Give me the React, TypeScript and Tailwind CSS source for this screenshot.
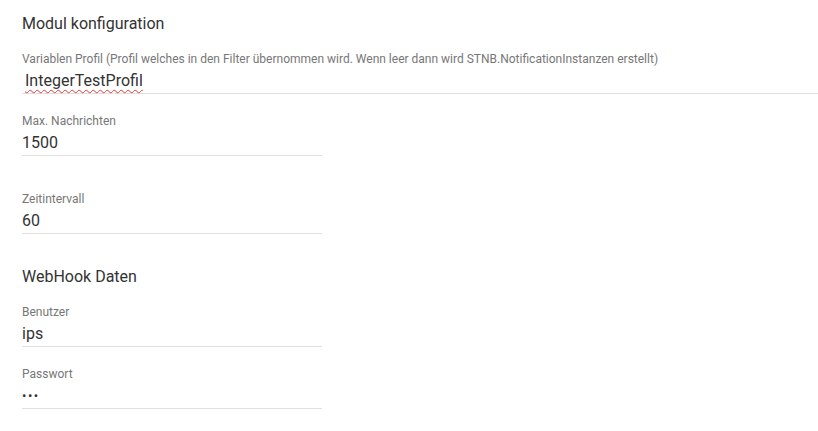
const font = { fontFamily: 'Roboto, "Noto Sans", sans-serif' };

interface FieldProps {
  label: string;
  value: string;
  wide?: boolean;
  spell?: boolean;
  className?: string;
}

function Field({ label, value, wide, spell, className }: FieldProps) {
  return (
    <div className={`${wide ? 'w-full' : 'w-[300px]'} ${className ?? ''}`}>
      <div className="h-[16px] pt-[1px] text-[12px] leading-[15px] text-[#777] whitespace-nowrap">{label}</div>
      <div className="h-[27px] pt-[2px] border-b border-[#e0e0e0] text-[16px] leading-[24px] text-[#333]">
        {spell ? (
          <span className="pl-[3px] underline decoration-wavy decoration-[#e53935] decoration-1 underline-offset-[3px]">
            {value}
          </span>
        ) : (
          value
        )}
      </div>
    </div>
  );
}

export default function App() {
  return (
    <div className="w-[818px] h-[431px] bg-white overflow-hidden" style={font}>
      <div className="pl-[22px] pt-[14px]">
        <h2 className="h-[20px] text-[16px] leading-[20px] text-[#333] mb-[17px]">Modul konfiguration</h2>

        <Field
          wide
          spell
          className="mb-[19px]"
          label="Variablen Profil (Profil welches in den Filter übernommen wird. Wenn leer dann wird STNB.NotificationInstanzen erstellt)"
          value="IntegerTestProfil"
        />
        <Field className="mb-[35px]" label="Max. Nachrichten" value="1500" />
        <Field className="mb-[33px]" label="Zeitintervall" value="60" />

        <h2 className="h-[20px] text-[16px] leading-[20px] text-[#333] mb-[17px]">WebHook Daten</h2>

        <Field className="mb-[19px]" label="Benutzer" value="ips" />
        <div className="w-[300px]">
          <div className="h-[16px] pt-[1px] text-[12px] leading-[15px] text-[#777]">Passwort</div>
          <div className="h-[27px] pt-[2px] border-b border-[#e0e0e0] text-[13px] leading-[24px] text-[#333] tracking-[1.5px]">
            •••
          </div>
        </div>
      </div>
    </div>
  );
}
